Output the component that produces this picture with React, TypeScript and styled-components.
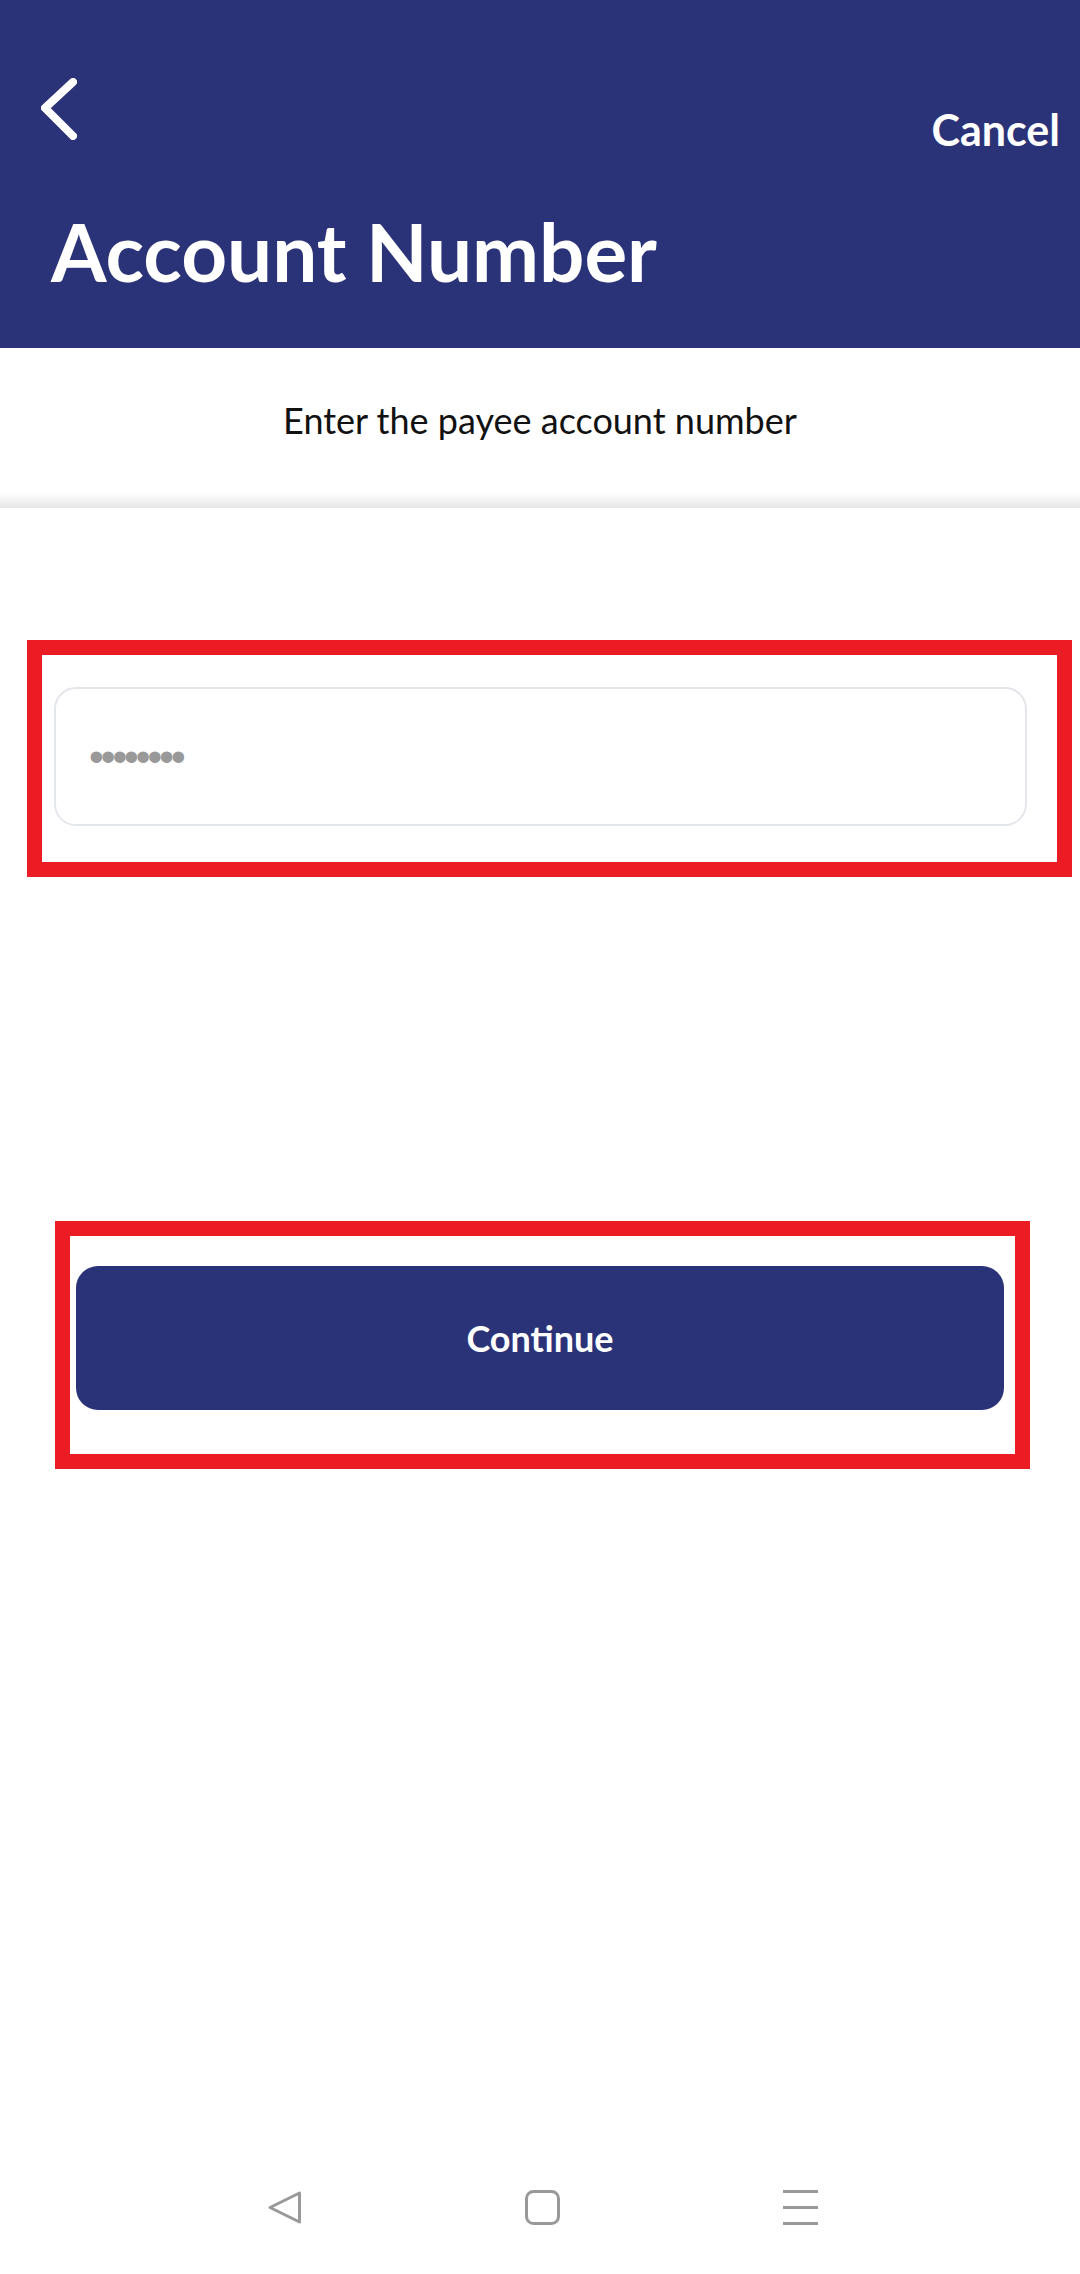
import styled, { createGlobalStyle } from "styled-components";

const GlobalStyle = createGlobalStyle`
    html, body {
        margin: 0;
        padding: 0;
        background: #ffffff;
        font-family: Lato, "Open Sans", sans-serif;
    }
    * {
        box-sizing: border-box;
    }
`;

const Page = styled.div`
    min-height: 2274px;
    display: flex;
    flex-direction: column;
    background: #ffffff;
`;

const Header = styled.header`
    height: 348px;
    background: #2b3378;
    color: #ffffff;
    padding: 0 20px 0 41px;
    display: flex;
    flex-direction: column;
`;

const TopRow = styled.div`
    display: flex;
    justify-content: space-between;
    align-items: flex-start;
    margin-top: 78px;
`;

const BackButton = styled.button`
    border: none;
    background: none;
    padding: 0;
    width: 36px;
    height: 62px;
    display: block;
`;

const Cancel = styled.span`
    margin-top: 30px;
    font-size: 43px;
    line-height: 1;
    font-weight: 700;
`;

const Title = styled.h1`
    margin: 60px 0 0 10px;
    font-size: 80px;
    line-height: 1;
    font-weight: 700;
`;

const SubHeader = styled.div`
    height: 160px;
    padding-top: 54px;
    text-align: center;
    font-size: 36px;
    line-height: 1;
    color: #111111;
    background: linear-gradient(to bottom, #ffffff calc(100% - 15px), #e6e6e6 100%);
`;

const Body = styled.main`
    display: flex;
    flex-direction: column;
    padding-top: 132px;
`;

const Frame = styled.div<{ $left: number; $right: number; $pad: string }>`
    margin: 0 ${(p) => p.$right}px 0 ${(p) => p.$left}px;
    border: 15px solid #ec1c24;
    padding: ${(p) => p.$pad};
`;

const AccountInput = styled.input`
    display: block;
    width: 100%;
    height: 139px;
    border: 2px solid #e3e6eb;
    border-radius: 22px;
    padding: 0 0 0 33px;
    background: #ffffff;
    font-family: "Liberation Sans", sans-serif;
    font-size: 42px;
    letter-spacing: -3px;
    outline: none;
    &::placeholder {
        color: #999999;
    }
`;

const Spacer = styled.div`
    height: 344px;
`;

const ContinueButton = styled.button`
    display: block;
    width: 100%;
    height: 144px;
    border: none;
    border-radius: 22px;
    background: #2b3378;
    color: #ffffff;
    font-family: Lato, sans-serif;
    font-size: 36px;
    font-weight: 700;
`;

const NavBar = styled.nav`
    margin-top: auto;
    height: 134px;
    display: flex;
    justify-content: center;
    align-items: center;
    gap: 223px;
    padding-left: 4px;
`;

const NavIcon = styled.svg`
    width: 35px;
    height: 35px;
    display: block;
`;

function App() {
    return (
        <Page>
            <GlobalStyle />
            <Header>
                <TopRow>
                    <BackButton aria-label="Back">
                        <svg width="36" height="62" viewBox="0 0 36 62">
                            <path
                                d="M32 4 L4 30 L32 58"
                                fill="none"
                                stroke="#ffffff"
                                strokeWidth="8"
                                strokeLinecap="round"
                                strokeLinejoin="round"
                            />
                        </svg>
                    </BackButton>
                    <Cancel>Cancel</Cancel>
                </TopRow>
                <Title>Account Number</Title>
            </Header>
            <SubHeader>Enter the payee account number</SubHeader>
            <Body>
                <Frame $left={27} $right={8} $pad="32px 30px 36px 12px">
                    <AccountInput placeholder="••••••••" />
                </Frame>
                <Spacer />
                <Frame $left={55} $right={50} $pad="30px 11px 44px 6px">
                    <ContinueButton>Continue</ContinueButton>
                </Frame>
            </Body>
            <NavBar>
                <NavIcon viewBox="0 0 35 35">
                    <path
                        d="M32.5 3 L32.5 32 L3 17.5 Z"
                        fill="none"
                        stroke="#999999"
                        strokeWidth="3"
                        strokeLinejoin="round"
                    />
                </NavIcon>
                <NavIcon viewBox="0 0 35 35">
                    <rect x="1.5" y="1.5" width="32" height="32" rx="7" fill="none" stroke="#999999" strokeWidth="3" />
                </NavIcon>
                <NavIcon viewBox="0 0 35 35">
                    <rect x="0" y="0" width="35" height="3" fill="#999999" />
                    <rect x="0" y="16" width="35" height="3" fill="#999999" />
                    <rect x="0" y="32" width="35" height="3" fill="#999999" />
                </NavIcon>
            </NavBar>
        </Page>
    );
}

export default App;
